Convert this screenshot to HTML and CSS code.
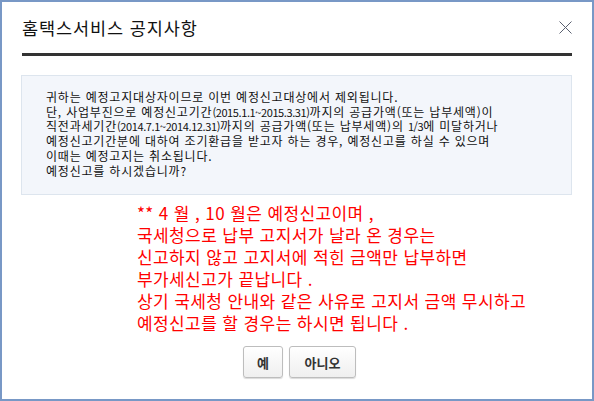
FILE: index.html
```html
<!DOCTYPE html>
<html lang="ko">
<head>
  <meta charset="UTF-8">
  <title>홈택스서비스 공지사항</title>
  <link rel="stylesheet" href="styles.css">
</head>
<body>
  <div class="dialog">
    <div class="header">
      <h1 class="title">홈택스서비스 공지사항</h1>
      <button class="close" aria-label="닫기">
        <svg width="13" height="13" viewBox="0 0 13 13">
          <path d="M0.5 0.5 L12.5 12.5 M12.5 0.5 L0.5 12.5" stroke="#5a6070" stroke-width="1" fill="none"/>
        </svg>
      </button>
    </div>

    <div class="info">
      <p>귀하는 예정고지대상자이므로 이번 예정신고대상에서 제외됩니다.</p>
      <p>단, 사업부진으로 예정신고기간<span class="num">(2015.1.1~2015.3.31)</span>까지의 공급가액(또는 납부세액)이</p>
      <p>직전과세기간<span class="num">(2014.7.1~2014.12.31)</span>까지의 공급가액(또는 납부세액)의 <span class="num">1/3</span>에 미달하거나</p>
      <p>예정신고기간분에 대하여 조기환급을 받고자 하는 경우, 예정신고를 하실 수 있으며</p>
      <p>이때는 예정고지는 취소됩니다.</p>
      <p>예정신고를 하시겠습니까?</p>
    </div>

    <div class="notice">
      <p>** 4 월 , 10 월은 예정신고이며 ,</p>
      <p>국세청으로 납부 고지서가 날라 온 경우는</p>
      <p>신고하지 않고 고지서에 적힌 금액만 납부하면</p>
      <p>부가세신고가 끝납니다 .</p>
      <p>상기 국세청 안내와 같은 사유로 고지서 금액 무시하고</p>
      <p>예정신고를 할 경우는 하시면 됩니다 .</p>
    </div>

    <div class="buttons">
      <button class="btn btn-yes">예</button>
      <button class="btn btn-no">아니오</button>
    </div>
  </div>
</body>
</html>
```

FILE: styles.css
```css
html, body {
  margin: 0;
  padding: 0;
}
body {
  font-family: "Noto Sans CJK KR", "Noto Sans", sans-serif;
  background-color: #fff;
  color: #000;
}
.dialog {
  box-sizing: border-box;
  width: 594px;
  height: 401px;
  border: 2px solid #7898c6;
  background-color: #fff;
}
.header {
  display: flex;
  align-items: center;
  justify-content: space-between;
  margin: 0 20px;
  height: 51px;
  border-bottom: 3px solid #333;
}
.title {
  margin: 0;
  font-size: 17.5px;
  font-weight: normal;
  line-height: 22px;
  color: #111;
  letter-spacing: 0.9px;
}
.close {
  border: none;
  background: none;
  padding: 0;
  width: 13px;
  height: 13px;
  line-height: 0;
  cursor: pointer;
}
.info {
  margin: 19px 20px 0 19px;
  height: 118px;
  border: 1px solid #dde5ee;
  background-color: #f3f6fb;
}
.info p {
  margin: 0;
  padding-left: 24px;
  font-size: 12px;
  line-height: 14.7px;
  letter-spacing: 0.8px;
  color: #111;
}
.info p:first-child {
  margin-top: 14px;
}
.info .num {
  font-size: 11px;
  letter-spacing: -0.4px;
}
.notice {
  margin-top: 7px;
  padding-left: 135px;
}
.notice p {
  margin: 0;
  font-size: 17px;
  line-height: 22px;
  letter-spacing: 0.4px;
  color: #f00;
}
.buttons {
  display: flex;
  gap: 6px;
  margin-top: 12px;
  padding-left: 241px;
}
.btn {
  height: 32px;
  padding: 0;
  border: 1px solid #bdbdbd;
  border-radius: 3px;
  background: linear-gradient(#ffffff, #efefef);
  box-shadow: 0 1px 1px rgba(0, 0, 0, 0.15);
  font-family: "Noto Sans CJK KR", sans-serif;
  font-size: 13px;
  font-weight: bold;
  color: #333;
  cursor: pointer;
}
.btn-yes {
  width: 40px;
}
.btn-no {
  width: 67px;
}
```
